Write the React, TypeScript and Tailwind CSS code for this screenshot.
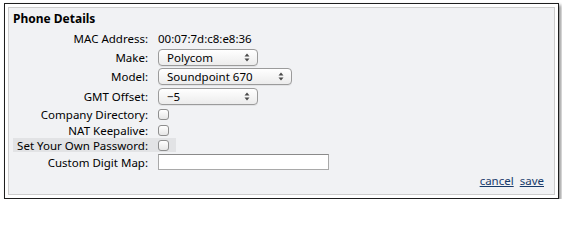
import type { ReactNode } from 'react';

const font = { fontFamily: '"Noto Sans", "DejaVu Sans", sans-serif' };

function Arrows() {
  return (
    <svg width="6" height="9" viewBox="0 0 6 9" className="shrink-0">
      <path d="M3 0.5 L5.5 3.5 L0.5 3.5 Z" fill="#4a4a4a" />
      <path d="M3 8.5 L5.5 5.5 L0.5 5.5 Z" fill="#4a4a4a" />
    </svg>
  );
}

function Select({ value, width }: { value: string; width: string }) {
  return (
    <div
      className={`${width} h-[17px] flex items-center justify-between pl-[8px] pr-[7px] rounded-[4px] border border-[#9b9b9b] bg-gradient-to-b from-white to-[#ececec] shadow-[0_1px_0_rgba(0,0,0,0.06)]`}
    >
      <span className="leading-none">{value}</span>
      <Arrows />
    </div>
  );
}

function Checkbox() {
  return (
    <div className="w-[11px] h-[11px] rounded-[3px] border border-[#8e8e8e] bg-gradient-to-b from-white to-[#e6e6e6]" />
  );
}

function Row({ label, height, children }: { label: string; height: string; children: ReactNode }) {
  return (
    <div className={`flex items-center ${height}`}>
      <div className="w-[135px] text-right pr-0">{label}</div>
      <div className="ml-[10px] flex items-center">{children}</div>
    </div>
  );
}

export default function App() {
  return (
    <div className="pt-[3px] pl-[4px] bg-white" style={font}>
      <div className="w-[555px] h-[196px] border border-[#1e1e1e] bg-white p-[3px] shadow-[2px_2px_3px_rgba(0,0,0,0.45)]">
        <div className="h-full border border-[#cdcdcd] bg-[#f1f2f4] px-[4px] text-[11.5px] text-black flex flex-col">
          <div className="h-[22px] flex items-center text-[12px] font-bold">Phone Details</div>

          <Row label="MAC Address:" height="h-[18px]">
            <span>00:07:7d:c8:e8:36</span>
          </Row>
          <Row label="Make:" height="h-[19px]">
            <Select value="Polycom" width="w-[100px]" />
          </Row>
          <Row label="Model:" height="h-[20px]">
            <Select value="Soundpoint 670" width="w-[134px]" />
          </Row>
          <Row label="GMT Offset:" height="h-[20px]">
            <Select value="−5" width="w-[100px]" />
          </Row>
          <Row label="Company Directory:" height="h-[16px]">
            <Checkbox />
          </Row>
          <Row label="NAT Keepalive:" height="h-[15px]">
            <Checkbox />
          </Row>
          <div className="h-[15px] flex items-center">
            <div className="h-[14px] flex items-center bg-[#e2e3e5] pr-[7px]">
              <div className="w-[135px] text-right">Set Your Own Password:</div>
              <div className="ml-[10px]">
                <Checkbox />
              </div>
            </div>
          </div>
          <Row label="Custom Digit Map:" height="h-[19px]">
            <div className="w-[171px] h-[16px] bg-white border border-[#a9a9a9] border-t-[#8a8a8a]" />
          </Row>

          <div className="flex-1 flex items-end justify-end gap-[6px] pr-[6px] pb-[5px]">
            <a href="#" className="text-[#173a6a] underline">cancel</a>
            <a href="#" className="text-[#173a6a] underline">save</a>
          </div>
        </div>
      </div>
    </div>
  );
}
